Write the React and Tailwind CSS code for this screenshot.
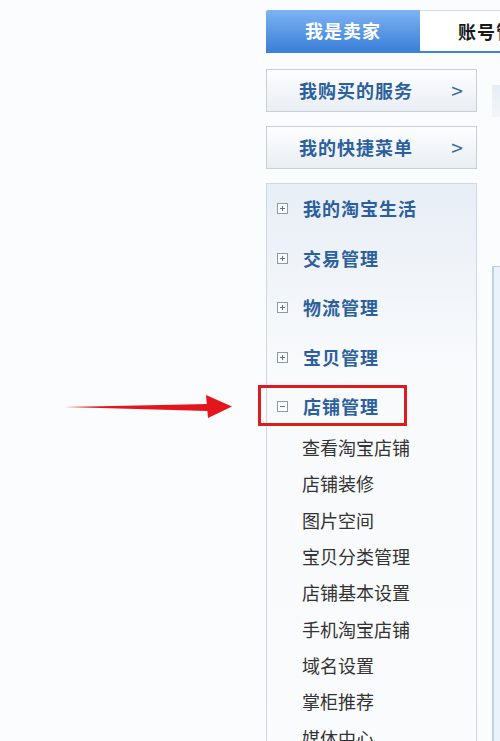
const cjk = { fontFamily: '"Noto Sans CJK SC", "Noto Sans", sans-serif' };

const groups = ['我的淘宝生活', '交易管理', '物流管理', '宝贝管理'];
const shopLinks = ['查看淘宝店铺', '店铺装修', '图片空间', '宝贝分类管理', '店铺基本设置', '手机淘宝店铺', '域名设置', '掌柜推荐', '媒体中心'];

const Toggle = ({ open }) => (
  <svg width="11" height="11" viewBox="0 0 11 11" className="shrink-0">
    <rect x="0.5" y="0.5" width="10" height="10" fill="#fff" stroke="#8a9bb0" />
    <path d="M3 5.5h5" stroke="#5a7394" strokeWidth="1" />
    {!open && <path d="M5.5 3v5" stroke="#5a7394" strokeWidth="1" />}
  </svg>
);

const SideButton = ({ label }) => (
  <div className="h-[43px] flex items-center justify-between pl-[32px] pr-[13px] border border-[#c9ced4] bg-gradient-to-b from-[#fdfeff] to-[#e9eef4]">
    <span className="text-[18px] font-bold tracking-[1px] text-[#2b5f9e]">{label}</span>
    <span className="text-[21px] text-[#3c6c9c] leading-none">&gt;</span>
  </div>
);

const GroupRow = ({ label, open }) => (
  <div className="h-[49.5px] flex items-center gap-[15px] pl-[10px]">
    <Toggle open={open} />
    <span className="text-[18px] font-bold tracking-[1px] text-[#2b5f9e]">{label}</span>
  </div>
);

export default function App() {
  return (
    <div className="relative w-[500px] h-[741px] overflow-hidden bg-[#fbfcfd]" style={cjk}>
      {/* annotation arrow */}
      <svg className="absolute left-[60px] top-[390px]" width="180" height="32" viewBox="0 0 180 32">
        <path d="M5 17 L148 14 L148 21 Z" fill="#e3171b" />
        <path d="M146 5 L172 16.5 L148 28 Z" fill="#e3171b" />
      </svg>

      <div className="ml-[266px] pt-[10px]">
        <div className="flex h-[43px] border-b-2 border-[#3d82d6]">
          <div className="w-[154px] shrink-0 flex items-center justify-center bg-gradient-to-b from-[#7db3f2] to-[#3b80d9] rounded-tl-[2px]">
            <span className="text-[18px] font-bold tracking-[1px] text-white">我是卖家</span>
          </div>
          <div className="flex-1 min-w-0 overflow-hidden flex items-center pl-[38px] bg-white border-t border-[#d5dbe2] whitespace-nowrap">
            <span className="text-[18px] font-bold tracking-[1px] text-[#1a1a1a]">账号管理</span>
          </div>
        </div>

        <div className="flex">
          <div className="w-[211px] shrink-0">
            <div className="mt-[16px] flex flex-col gap-[14px]">
              <SideButton label="我购买的服务" />
              <SideButton label="我的快捷菜单" />
            </div>

            <div className="mt-[14px] h-[600px] border border-[#cfd7e0] bg-gradient-to-b from-[#e8eef6] via-[#f8fafc] via-30% to-[#fafbfc]">
              {groups.map((g) => (
                <GroupRow key={g} label={g} />
              ))}
              <div className="relative">
                <GroupRow label="店铺管理" open />
                <div className="absolute left-[-9px] top-[3px] w-[149px] h-[41px] border-[3px] border-[#dc1c1f]" />
              </div>
              <div className="-mt-[2px]">
                {shopLinks.map((s) => (
                  <div key={s} className="h-[36.3px] flex items-center pl-[35px] text-[18px] text-[#333]">
                    {s}
                  </div>
                ))}
              </div>
            </div>
          </div>

          <div className="ml-[15px] flex-1">
            <div className="mt-[32px] h-[32px] bg-gradient-to-b from-[#e6edf5] to-[#f3f6f9]" />
            <div className="mt-[149px] h-[500px] border-l-2 border-t border-[#c3cfdb] bg-[#eaf2fc]" />
          </div>
        </div>
      </div>
    </div>
  );
}
